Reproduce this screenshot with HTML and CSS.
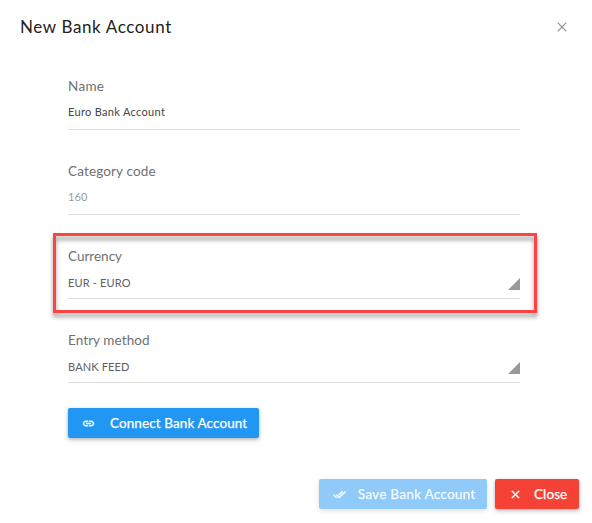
FILE: index.html
```html
<!DOCTYPE html>
<html lang="en">
<head>
    <meta charset="UTF-8">
    <meta name="viewport" content="width=device-width, initial-scale=1.0">
    <title>New Bank Account</title>
    <link rel="stylesheet" href="styles.css">
</head>
<body>
    <div class="modal">
        <div class="modal-header">
            <h1>New Bank Account</h1>
            <button type="button" class="dismiss" aria-label="Close">
                <svg width="10" height="10" viewBox="0 0 10 10"><path d="M.7.7l8.6 8.6M9.3.7L.7 9.3"/></svg>
            </button>
        </div>
        <form class="modal-body">
            <div class="form-group">
                <div class="label label-name">Name</div>
                <div class="value value-name">Euro Bank Account</div>
            </div>
            <div class="form-group">
                <div class="label">Category code</div>
                <div class="value disabled">160</div>
            </div>
            <div class="form-group select highlighted">
                <div class="label label-currency">Currency</div>
                <div class="value"><span>EUR - EURO</span><span class="caret"></span></div>
            </div>
            <div class="form-group select">
                <div class="label label-method">Entry method</div>
                <div class="value"><span>BANK FEED</span><span class="caret"></span></div>
            </div>
            <button type="button" class="btn btn-connect">
                <svg width="13" height="13" viewBox="0 0 24 24"><path d="M3.9 12c0-1.71 1.39-3.1 3.1-3.1h4V7H7c-2.76 0-5 2.24-5 5s2.24 5 5 5h4v-1.9H7c-1.71 0-3.1-1.39-3.1-3.1zM8 13h8v-2H8v2zm9-6h-4v1.9h4c1.71 0 3.1 1.39 3.1 3.1s-1.39 3.1-3.1 3.1h-4V17h4c2.76 0 5-2.24 5-5s-2.24-5-5-5z"/></svg>
                <span>Connect Bank Account</span>
            </button>
        </form>
        <div class="modal-footer">
            <button type="button" class="btn btn-save">
                <svg width="13" height="13" viewBox="0 0 24 24"><path d="M18 7l-1.41-1.41-6.34 6.34 1.41 1.41L18 7zm4.24-1.41L11.66 16.17 7.48 12l-1.41 1.41L11.66 19l12-12-1.42-1.41zM.41 13.41L6 19l1.41-1.41L1.83 12 .41 13.41z"/></svg>
                <span>Save Bank Account</span>
            </button>
            <button type="button" class="btn btn-close">
                <svg width="13" height="13" viewBox="0 0 24 24"><path d="M19 6.41L17.59 5 12 10.59 6.41 5 5 6.41 10.59 12 5 17.59 6.41 19 12 13.41 17.59 19 19 17.59 13.41 12z"/></svg>
                <span>Close</span>
            </button>
        </div>
    </div>
</body>
</html>
```

FILE: styles.css
```css
body {
    font-family: Lato, 'Open Sans', sans-serif;
    background-color: #fff;
    color: #5e5e5e;
    margin: 0;
}
.modal {
    box-sizing: border-box;
    height: 523px;
    display: flex;
    flex-direction: column;
}
.modal-header {
    display: flex;
    justify-content: space-between;
    align-items: center;
    height: 54px;
    padding: 0 25px 0 20px;
}
h1 {
    margin: 0;
    font-size: 17px;
    font-weight: 400;
    line-height: 24px;
    letter-spacing: 0.62px;
    color: #222;
}
.dismiss {
    display: flex;
    padding: 0;
    border: 0;
    background: none;
}
.dismiss svg {
    fill: none;
    stroke: #8a8a8a;
    stroke-width: 1.1;
}
.modal-body {
    padding: 22px 72px 0 68px;
}
.form-group {
    position: relative;
    height: 53px;
    margin-bottom: 31px;
    border-bottom: 1px solid #ddd;
}
.form-group.select {
    height: 52px;
}
.label {
    font-size: 13.5px;
    line-height: 20px;
    letter-spacing: 0.15px;
    color: #707070;
}
.label-name {
    letter-spacing: 0.3px;
}
.label-currency {
    letter-spacing: 0;
}
.label-method {
    letter-spacing: 0.08px;
}
.value {
    display: flex;
    justify-content: space-between;
    margin-top: 6px;
    font-size: 11px;
    line-height: 20px;
    letter-spacing: 0.15px;
    color: #606060;
}
.select .value {
    margin-top: 7px;
}
.value-name {
    letter-spacing: 0.32px;
    color: #444;
}
.value.disabled {
    color: #999;
}
.caret {
    width: 12px;
    height: 12px;
    margin-top: 5px;
    background-color: #999;
    clip-path: polygon(100% 0, 100% 100%, 0 100%);
}
/* red frame drawn around the currency field */
.highlighted::after {
    content: '';
    position: absolute;
    top: -13px;
    left: -15px;
    width: 478px;
    height: 74px;
    border: 3px solid #ff4343;
    filter: drop-shadow(0 4px 2px rgba(0, 0, 0, 0.4));
}
.btn {
    display: flex;
    align-items: center;
    height: 30px;
    padding: 0;
    border: 0;
    border-radius: 2px;
    font-family: inherit;
    font-size: 13.5px;
    font-weight: 400;
    letter-spacing: 0.1px;
    color: #fff;
    white-space: nowrap;
    -webkit-text-stroke: 0.25px #fff;
    box-shadow: 0 2px 5px rgba(0, 0, 0, 0.2), 0 1px 3px rgba(0, 0, 0, 0.15);
}
.btn svg {
    fill: #fff;
    stroke: #fff;
    stroke-width: 0.9;
    flex-shrink: 0;
}
.btn-connect {
    width: 191px;
    margin-top: -6px;
    padding-left: 14px;
    gap: 15px;
    background-color: #2196f3;
}
.modal-footer {
    display: flex;
    justify-content: flex-end;
    gap: 8px;
    margin-top: auto;
    padding: 0 13px 14px 0;
}
.btn-save {
    width: 168px;
    padding-left: 14px;
    gap: 12px;
    letter-spacing: 0.28px;
    background-color: #90caf9;
    box-shadow: 0 2px 5px rgba(0, 0, 0, 0.12);
}
.btn-save span {
    opacity: 0.9;
}
.btn-close {
    width: 84px;
    padding-left: 14px;
    gap: 12px;
    background-color: #f44336;
}
```
